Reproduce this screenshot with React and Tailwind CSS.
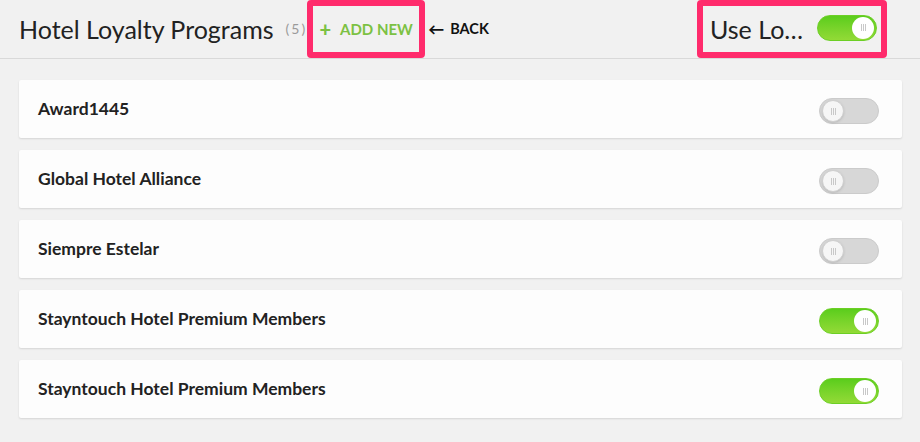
const programs = [
  { name: "Award1445", on: false },
  { name: "Global Hotel Alliance", on: false },
  { name: "Siempre Estelar", on: false },
  { name: "Stayntouch Hotel Premium Members", on: true },
  { name: "Stayntouch Hotel Premium Members", on: true },
];

const Toggle = ({ on, className = "" }) => (
  <div
    className={
      (on
        ? "relative w-[60px] h-[26px] rounded-full bg-gradient-to-b from-[#5acd1c] to-[#92da36] border border-[#6ccf25] flex items-center justify-end px-[2px] "
        : "relative w-[60px] h-[26px] rounded-full bg-[#d7d7d7] border border-[#cbcbcb] flex items-center justify-start px-[2px] ") + className
    }
  >
    <div
      className={
        on
          ? "w-[22px] h-[22px] rounded-full bg-white flex items-center justify-center gap-[1px]"
          : "w-[22px] h-[22px] rounded-full bg-[#f6f6f6] border border-[#cfcfcf] shadow-sm flex items-center justify-center gap-[1px]"
      }
    >
      <span className="w-px h-[7px] bg-[#c8c8c8]" />
      <span className="w-px h-[7px] bg-[#c8c8c8]" />
      <span className="w-px h-[7px] bg-[#c8c8c8]" />
    </div>
  </div>
);

export default function App() {
  return (
    <div
      className="min-h-screen w-full bg-[#f1f1f1] text-[#222]"
      style={{ fontFamily: "Lato, 'Noto Sans', sans-serif" }}
    >
      <header className="h-[59px] flex items-stretch border-b border-[#d9d9d9] pl-[19px] pr-[33px]">
        <div className="flex items-center">
          <h1 className="text-[25px] font-normal text-[#222] leading-none">Hotel Loyalty Programs</h1>
          <span className="ml-[12px] text-[14px] text-[#9a9a9a] tracking-[2px] leading-none">(5)</span>
        </div>
        <div className="w-[118px] h-[58px] border-[6px] border-[#ff2b6c] rounded-[4px] flex items-center justify-center">
          <button className="flex items-center gap-[9px] text-[#7cc143] font-bold text-[15px] uppercase">
            <span className="text-[20px] leading-none font-black">+</span>
            Add New
          </button>
        </div>
        <button className="ml-[3px] flex items-center gap-[6px] font-bold text-[14.5px] uppercase text-[#111]">
          <span className="text-[16px] leading-none font-black">←</span>
          Back
        </button>
        <div className="ml-auto w-[190px] h-[58px] border-[6px] border-[#ff2b6c] rounded-[4px] flex items-center justify-between pl-[7px] pr-[4px]">
          <span className="text-[25px] text-[#222] leading-none">Use Lo…</span>
          <Toggle on={true} className="mb-[3px]" />
        </div>
      </header>

      <div className="flex flex-col gap-[12px] pt-[21px] pl-[19px] pr-[18px]">
        {programs.map((p, i) => (
          <div
            key={i}
            className="h-[58px] bg-[#fdfdfd] rounded-[2px] shadow-[0_1px_2px_rgba(0,0,0,0.12)] flex items-center justify-between pl-[19px] pr-[23px]"
          >
            <span className="text-[17.5px] font-bold text-[#222]">{p.name}</span>
            <Toggle on={p.on} className="mt-[4px]" />
          </div>
        ))}
      </div>
    </div>
  );
}
